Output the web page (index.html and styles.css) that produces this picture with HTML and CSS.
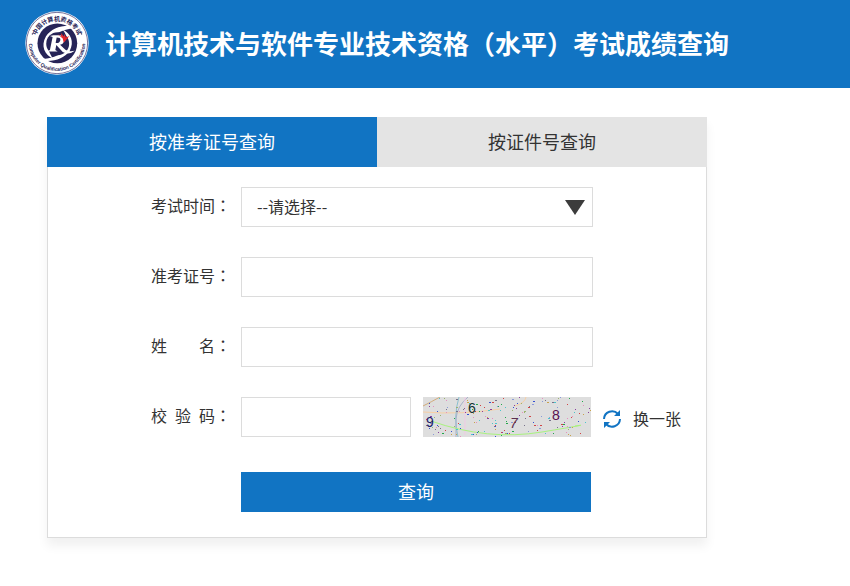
FILE: index.html
```
<!DOCTYPE html>
<html lang="zh-CN">
<head>
  <meta charset="UTF-8">
  <meta name="viewport" content="width=device-width, initial-scale=1.0">
  <title>考试成绩查询</title>
  <link rel="stylesheet" href="styles.css">
</head>
<body>
  <header class="header">
    <svg class="logo" viewBox="0 0 190 190" aria-hidden="true">
      <defs>
        <path id="arcTop" d="M29 95 A66 66 0 0 1 161 95"/>
        <path id="arcBottom" d="M13 76 A84 84 0 1 0 177 76"/>
      </defs>
      <circle cx="95" cy="95" r="94" fill="#fff"/>
      <circle cx="95" cy="95" r="91" fill="none" stroke="#34306a" stroke-width="2"/>
      <circle cx="96" cy="96" r="59" fill="#262457"/>
      <path d="M162 50 C124 36 80 48 62 76 C46 104 58 130 84 142 C70 124 64 104 76 84 C92 62 122 52 162 50Z" fill="#fff"/>
      <path d="M30 142 C70 156 114 146 133 118 C147 92 136 66 112 56 C126 74 131 96 118 114 C100 136 70 144 30 142Z" fill="#fff"/>
      <circle cx="97" cy="97" r="34" fill="#262457"/>
      <path d="M84 72 H104 Q122 76 116 91 Q112 99 104 100 L120 115 Q130 122 148 118 Q130 132 112 122 L93 101 L90 116 L97 120 H65 L74 116 L82 77 L74 74Z" fill="#fff"/>
      <path d="M94 79 L91 95 Q103 97 105 86 Q106 79 94 79Z" fill="#262457"/>
      <path d="M96 68 L108 76 L107 65 L115 76 L118 68 L121 79 L132 74 L115 94 L112 82Z" fill="#e5262b"/>
      <circle cx="22" cy="68" r="2" fill="#262457"/>
      <circle cx="168" cy="68" r="2" fill="#262457"/>
      <text class="logo-cn"><textPath href="#arcTop" startOffset="50%">中国计算机资格考试</textPath></text>
      <text class="logo-en"><textPath href="#arcBottom" startOffset="50%">Computer Qualification Certification</textPath></text>
    </svg>
    <h1>计算机技术与软件专业技术资格（水平）考试成绩查询</h1>
  </header>

  <main class="card">
    <div class="tabs">
      <button type="button" class="tab active">按准考证号查询</button>
      <button type="button" class="tab">按证件号查询</button>
    </div>

    <form class="form" id="queryForm">
      <div class="row">
        <label for="kssj"><span class="name">考试时间</span><span class="colon">：</span></label>
        <div class="select-box">
          <select id="kssj" name="kssj">
            <option>--请选择--</option>
          </select>
          <svg class="arrow" viewBox="0 0 20 15" aria-hidden="true"><path d="M0 0H20L10 15Z" fill="#3c3c3c"/></svg>
        </div>
      </div>

      <div class="row">
        <label for="zkzh"><span class="name">准考证号</span><span class="colon">：</span></label>
        <input type="text" id="zkzh" name="zkzh">
      </div>

      <div class="row">
        <label for="xm"><span class="name">姓名</span><span class="colon">：</span></label>
        <input type="text" id="xm" name="xm">
      </div>

      <div class="row">
        <label for="jym"><span class="name">校验码</span><span class="colon">：</span></label>
        <input type="text" id="jym" name="jym" class="short">
        <svg class="captcha" viewBox="0 0 168 40" role="img" aria-label="校验码">
          <rect width="168" height="40" fill="#dedede"/>
          <g fill="none">
            <path d="M0 9 Q8 5 17 0" stroke="#d1ab7c"/>
            <path d="M0 15 Q38 18 77 12 M92 9 Q102 6 103 0" stroke="#f8cfa4"/>
            <path d="M36 0 Q30 20 35 40" stroke="#8bc0cf"/>
            <path d="M45 0 Q34 9 33 22 V40" stroke="#a9b0cb"/>
            <path d="M42 0 V38" stroke="#f0c9e4"/>
            <path d="M8 24 Q65 44 119 35 T152 29" stroke="#a9f27f"/>
          </g>
          <g id="specks"></g>
          <g class="digits">
            <text x="3" y="30" fill="#1b1c68">9</text>
            <text x="45" y="16" fill="#0f3232">6</text>
            <text x="87" y="31" fill="#5b2f50" font-style="italic">7</text>
            <text x="129" y="23" fill="#5a1050">8</text>
          </g>
        </svg>
        <a href="#" class="change" id="change">
          <svg viewBox="0 0 20 20" aria-hidden="true">
            <path d="M2 10 A8 8 0 0 1 16 5 M18 10 A8 8 0 0 1 4 15" fill="none" stroke="#1174c3" stroke-width="2"/>
            <path d="M18 1V7H12Z M2 19V13H8Z" fill="#1174c3"/>
          </svg>
          <span>换一张</span>
        </a>
      </div>

      <button type="submit" class="submit">查询</button>
    </form>
  </main>

  <script src="script.js"></script>
</body>
</html>
```
FILE: styles.css
```
* {
  box-sizing: border-box;
}

body {
  margin: 0;
  background: #fff;
  color: #333;
  font-family: "Noto Sans CJK SC", sans-serif;
  font-size: 16px;
  text-spacing-trim: space-all;
}

.header {
  display: flex;
  align-items: center;
  gap: 16px;
  height: 88px;
  padding: 0 25px 2px;
  background: #1174c3;
}

.logo {
  flex: none;
  width: 64px;
  height: 64px;
}

.logo text {
  fill: #262457;
  font-weight: bold;
  text-anchor: middle;
}

.logo-cn {
  font-size: 18px;
}

.logo-en {
  font-family: "Liberation Sans", Arial, sans-serif;
  font-size: 15px;
}

.header h1 {
  margin: 0;
  color: #fff;
  font-size: 26px;
  line-height: 40px;
}

.card {
  max-width: 660px;
  margin: 29px 47px;
  box-shadow: 0 8px 10px rgba(0, 0, 0, 0.06);
}

.tabs {
  display: flex;
}

.tab {
  flex: 1;
  height: 50px;
  padding: 0 0 2px;
  border: none;
  background: #e4e4e4;
  color: #333;
  font-family: inherit;
  font-size: 18px;
  cursor: pointer;
}

.tab.active {
  background: #1174c3;
  color: #fff;
}

.form {
  padding: 20px 24px 25px 103px;
  border: 1px solid #dcdcdc;
  border-top: none;
}

.row {
  display: flex;
  height: 40px;
  margin-bottom: 30px;
}

label {
  display: flex;
  flex: none;
  width: 90px;
  line-height: 36px;
}

.name {
  width: 64px;
  text-align: justify;
  text-align-last: justify;
}

/* the colon sits in the middle of its square */
.colon {
  font-family: "Noto Sans CJK TC", sans-serif;
}

.select-box {
  position: relative;
  width: 352px;
}

input,
select {
  width: 352px;
  height: 40px;
  padding: 0 15px;
  border: 1px solid #dcdcdc;
  border-radius: 0;
  background: #fff;
  color: #333;
  font-family: inherit;
  font-size: 16px;
}

select {
  padding-bottom: 2px;
  appearance: none;
}

.arrow {
  position: absolute;
  top: 13px;
  right: 8px;
  width: 20px;
  height: 15px;
  pointer-events: none;
}

.short {
  width: 170px;
}

.captcha {
  flex: none;
  width: 168px;
  height: 40px;
  margin: 0 11px 0 12px;
}

.digits {
  font-family: "Liberation Sans", Arial, sans-serif;
  font-size: 14px;
}

.change {
  display: flex;
  align-items: center;
  gap: 11px;
  padding-top: 4px;
  color: #333;
  line-height: 36px;
  text-decoration: none;
  white-space: nowrap;
}

.change svg {
  width: 20px;
  height: 20px;
}

.change span {
  padding-bottom: 2px;
}

.submit {
  display: block;
  width: 350px;
  height: 40px;
  margin: 35px 0 0 90px;
  padding: 0 0 2px;
  border: none;
  background: #1174c3;
  color: #fff;
  font-family: inherit;
  font-size: 18px;
  cursor: pointer;
}
```
FILE: script.js
```
// noise dots over the captcha
var colors = ['#24a84c', '#3550d0', '#d04545', '#8a3f9e', '#4cc4cc', '#c9a24c', '#77728a', '#e58fc0', '#8a9ad8', '#9bb36f'];
var seed = 37;

function rand(max) {
  seed = (seed * 16807) % 2147483647;
  return seed % max;
}

function drawSpecks() {
  var html = '';
  for (var i = 0; i < 180; i++) {
    html += '<rect x="' + rand(168) + '" y="' + rand(40) + '" width="' + (1 + (i % 4 === 0)) + '" height="1" fill="' + colors[rand(colors.length)] + '"/>';
  }
  document.getElementById('specks').innerHTML = html;
}

drawSpecks();

document.getElementById('change').addEventListener('click', function (e) {
  e.preventDefault();
  drawSpecks();
});

document.getElementById('queryForm').addEventListener('submit', function (e) {
  e.preventDefault();
});

document.querySelectorAll('.tab').forEach(function (tab) {
  tab.addEventListener('click', function () {
    document.querySelector('.tab.active').classList.remove('active');
    tab.classList.add('active');
  });
});
```
